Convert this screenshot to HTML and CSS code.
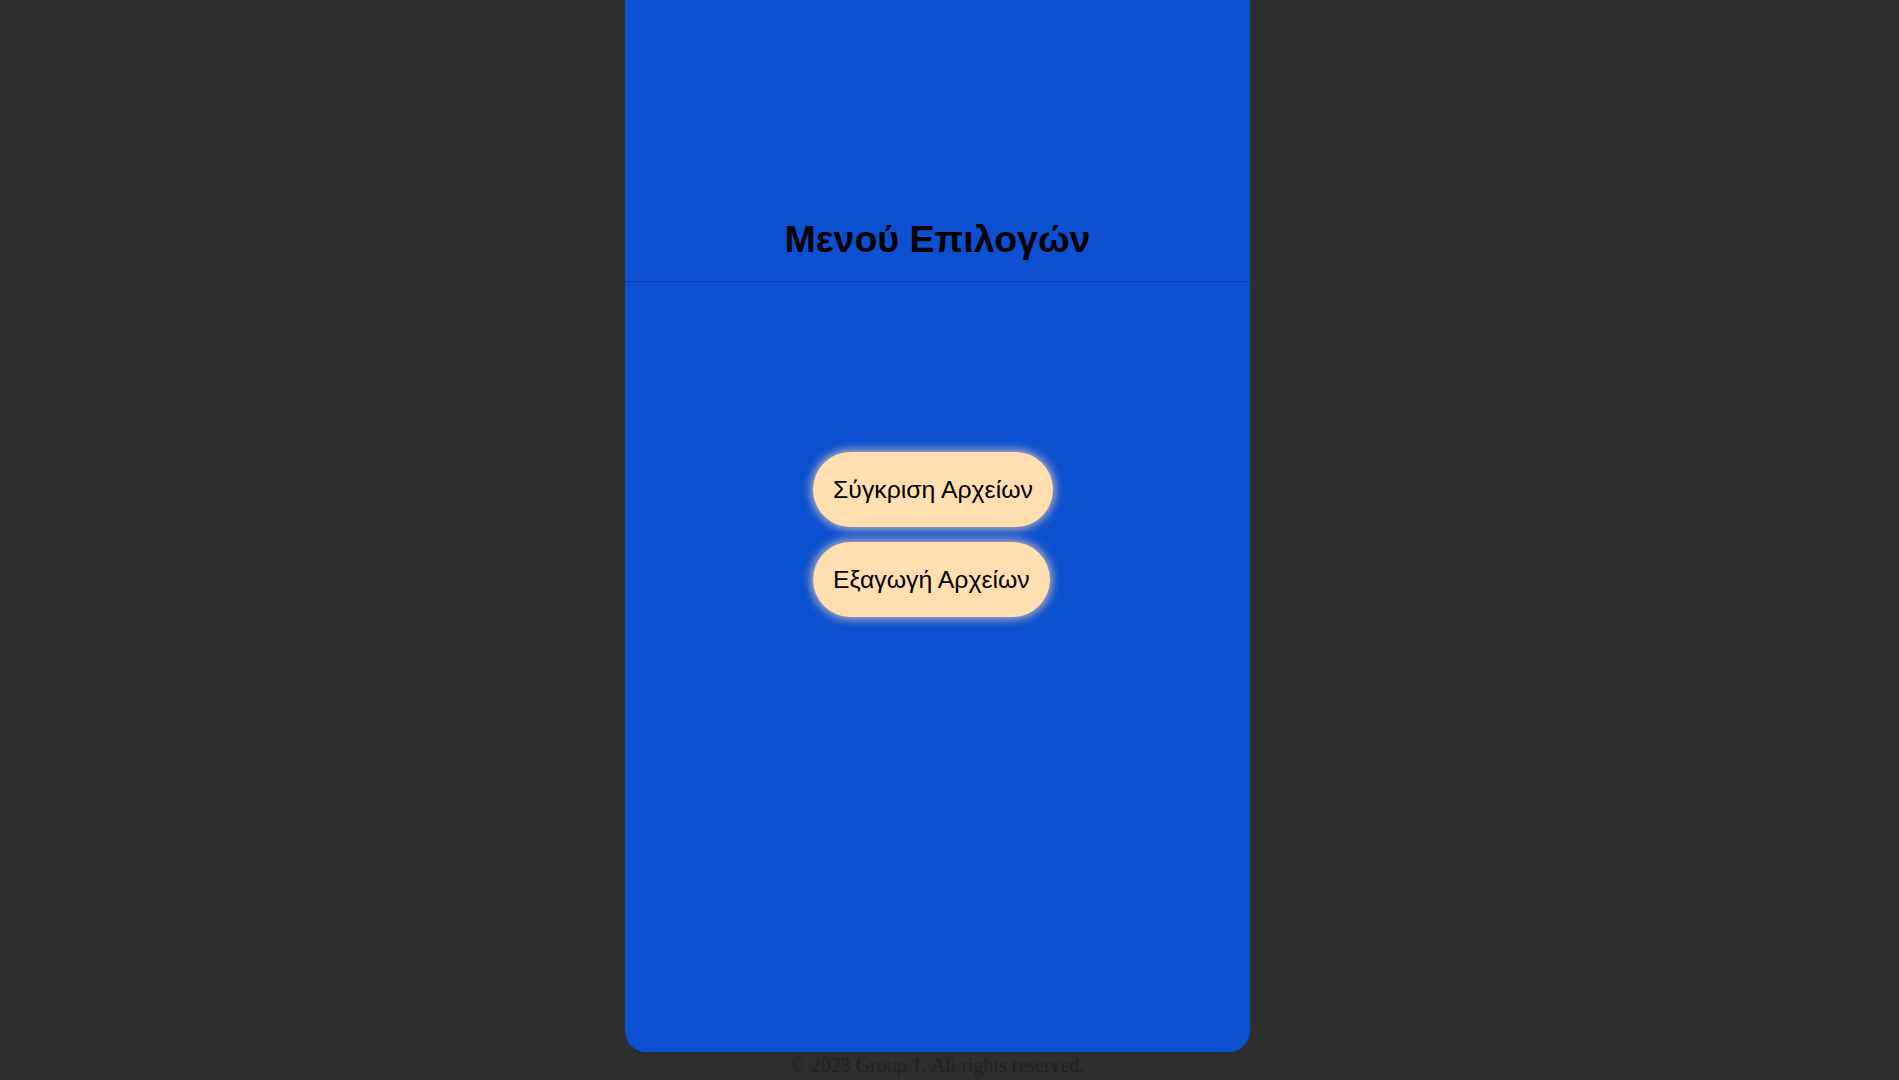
FILE: index.html
```html
<!DOCTYPE html>
<html lang="el">
<head>
<meta charset="utf-8">
<title>Μενού Επιλογών</title>
<link rel="stylesheet" href="styles.css">
</head>
<body>
<div class="page">
  <main class="panel">
    <header class="panel-header">
      <h1 class="title">Μενού Επιλογών</h1>
    </header>
    <section class="menu">
      <button class="menu-btn">Σύγκριση Αρχείων</button>
      <button class="menu-btn">Εξαγωγή Αρχείων</button>
    </section>
  </main>
  <footer class="footer">© 2023 Group 1. All rights reserved.</footer>
</div>
</body>
</html>
```
FILE: styles.css
```css
html, body {
  margin: 0;
  padding: 0;
  background: #2d2f2e;
  height: 1080px;
  overflow: hidden;
}

.page {
  width: 625px;
  margin-left: 625px;
  display: flex;
  flex-direction: column;
}

.panel {
  height: 1052px;
  background: #0c4fd0;
  border-radius: 0 0 21px 21px;
  display: flex;
  flex-direction: column;
}

.panel-header {
  padding: 217px 0 20px;
  border-bottom: 1px solid #0a3fa6;
}

.title {
  margin: 0;
  font-family: "Liberation Sans", Arial, sans-serif;
  font-weight: bold;
  font-size: 37.5px;
  line-height: 44px;
  color: #000;
  text-align: center;
}

.menu {
  display: flex;
  flex-direction: column;
  align-items: flex-start;
  gap: 15px;
  padding: 170px 0 0 188px;
}

.menu-btn {
  font-family: "Liberation Sans", Arial, sans-serif;
  font-size: 24.8px;
  line-height: 27px;
  padding: 24px 20px;
  border: none;
  border-radius: 40px;
  background: #ffdfb0;
  color: #000;
  box-shadow: 0 0 10px 2px rgba(255, 223, 176, 0.75);
  cursor: pointer;
}

.footer {
  margin-top: 2px;
  font-family: "Liberation Serif", Georgia, serif;
  font-size: 20px;
  line-height: 22px;
  color: #202226;
  text-align: center;
}
```
